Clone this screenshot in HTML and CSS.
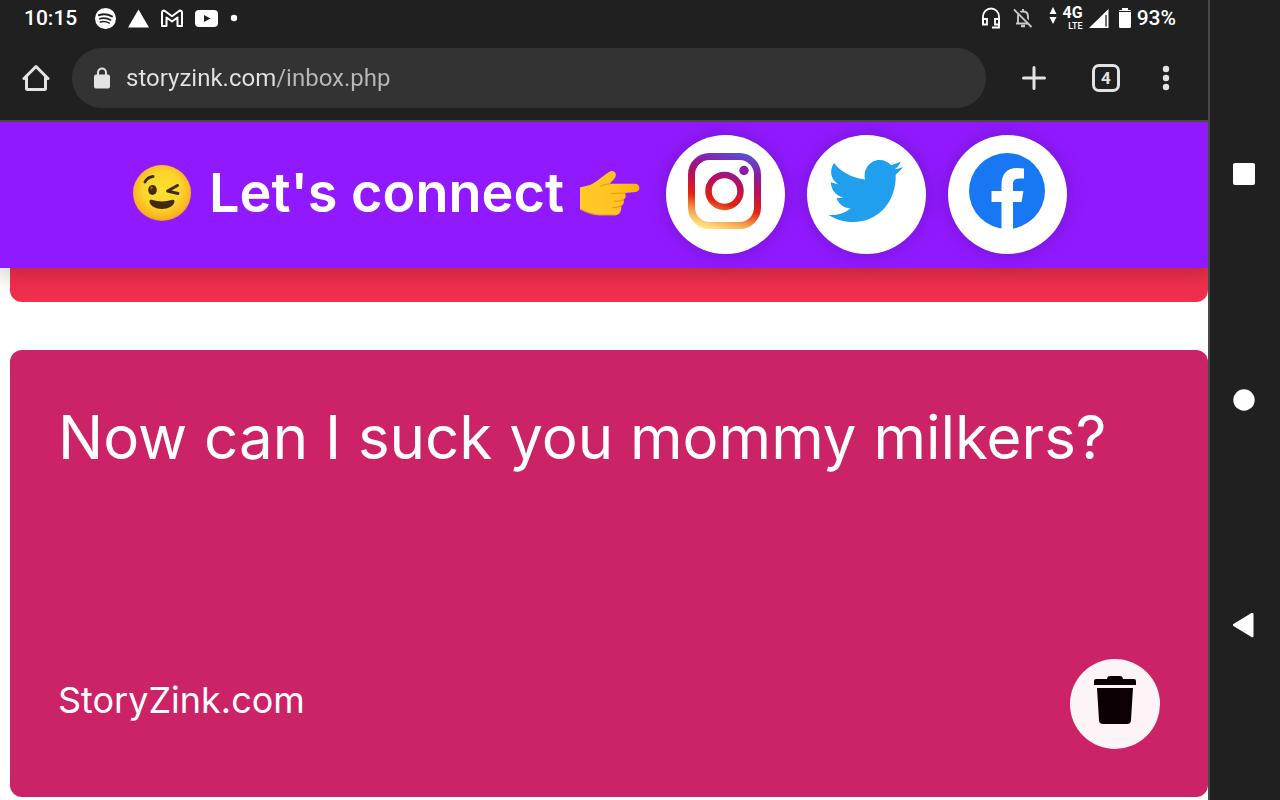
FILE: index.html
```
<!DOCTYPE html>
<html lang="en">
<head>
    <meta charset="UTF-8">
    <meta name="viewport" content="width=device-width, initial-scale=1.0">
    <title>StoryZink Inbox</title>
    <link rel="stylesheet" href="styles.css">
</head>
<body>
    <div class="screen">
        <div class="status-bar">
            <span class="clock">10:15</span>
            <div class="notifications">
                <svg width="21" height="21" viewBox="0 0 21 21" fill="none" stroke="#202020" stroke-linecap="round">
                    <circle cx="10.5" cy="10.5" r="10.5" fill="#fff" stroke="none"/>
                    <path d="M4 7.2c4-1.300 9-.9 13 1.200" stroke-width="2"/>
                    <path d="M4.800 10.700c3.500-1 7.500-.6 10.800 1.200" stroke-width="1.700"/>
                    <path d="M5.300 14c3-.8 6.200-.4 9 1.100" stroke-width="1.400"/>
                </svg>
                <svg width="21" height="21" viewBox="0 0 21 21"><path d="M10.500 1.500 21 19.500H0z" fill="#fff"/></svg>
                <svg width="22" height="21" viewBox="0 0 22 21" fill="none" stroke="#fff" stroke-width="2" stroke-linejoin="round">
                    <path d="M1 4.500C1 2.500 3 2.200 4.300 3.200L11 8.200l6.700-5C19 2.200 21 2.500 21 4.500V18h-4.500V9.500L11 13.500 5.500 9.500V18H1z"/>
                </svg>
                <svg width="23" height="21" viewBox="0 0 23 21"><rect x="0" y="2" width="23" height="17" rx="4" fill="#fff"/><path d="M9 7v7l6.500-3.500z" fill="#202020"/></svg>
                <svg width="8" height="8" viewBox="0 0 8 8"><circle cx="4" cy="4" r="3.200" fill="#fff"/></svg>
            </div>
            <div class="system-icons">
                <svg class="headset" width="20" height="22" viewBox="0 0 20 22" fill="none" stroke="#fff" stroke-width="1.800">
                    <path d="M2 17V9.500a8 8 0 0 1 16 0V20.500h-7"/>
                    <path d="M2 12h4v5.500H2zM14 12h4v5.500h-4z"/>
                </svg>
                <svg class="bell" width="20" height="22" viewBox="0 0 20 22" fill="none" stroke="#c8c8c8" stroke-width="1.900">
                    <path d="M3 16.500h14M5 16.500V9.500C5 6.500 7 4.500 10 4.500s5 2 5 5v7M10 4.500V2"/>
                    <path d="M8 19h4" stroke-width="2.500"/>
                    <path d="M2.500 1.500 19.500 18.500" stroke="#202020" stroke-width="2"/>
                    <path d="M1 2.500 18.500 20"/>
                </svg>
                <svg class="data" width="8" height="24" viewBox="0 0 8 24" fill="#fff"><path d="M4 1 7.500 8h-7zM4 18 .5 11h7z"/></svg>
                <div class="network"><b>4G</b><small>LTE</small></div>
                <svg width="20" height="21" viewBox="0 0 20 21"><path d="M19.500 1v19H0z" fill="#fff"/><path d="M17 7v11.500" stroke="#202020" stroke-width="1.300"/></svg>
                <svg class="battery" width="12" height="21" viewBox="0 0 12 21" fill="#fff"><path d="M3 0h6v2h2.500l.5 1H0l.5-1H3z"/><path d="M0 4h12v14.500a1.500 1.500 0 0 1-1.500 1.500h-9A1.500 1.500 0 0 1 0 18.500z"/></svg>
                <span>93%</span>
            </div>
        </div>

        <div class="toolbar">
            <button class="home" aria-label="Home">
                <svg width="28" height="28" viewBox="0 0 28 28" fill="none" stroke="#e3e3e3" stroke-width="3" stroke-linejoin="round" stroke-linecap="round"><path d="M2 14.500 14 2.500l12 12M4.500 12.500v12a1 1 0 0 0 1 1h17a1 1 0 0 0 1-1v-12"/></svg>
            </button>
            <div class="address">
                <svg width="16" height="22" viewBox="0 0 16 22"><path d="M4 8V5.500a4 4 0 0 1 8 0V8" fill="none" stroke="#e3e3e3" stroke-width="2"/><rect y="7.500" width="16" height="14" rx="2" fill="#e3e3e3"/></svg>
                <input type="text" aria-label="Address" value="storyzink.com/inbox.php">
            </div>
            <button class="new-tab" aria-label="New tab">
                <svg width="26" height="26" viewBox="0 0 26 26" stroke="#e3e3e3" stroke-width="3" stroke-linecap="round"><path d="M13 2.500v21M2.500 13h21"/></svg>
            </button>
            <button class="tabs" aria-label="Open tabs"><span>4</span></button>
            <button class="menu" aria-label="Menu">
                <svg width="8" height="26" viewBox="0 0 8 26" fill="#e3e3e3"><circle cx="4" cy="4" r="3.200"/><circle cx="4" cy="13" r="3.200"/><circle cx="4" cy="22" r="3.200"/></svg>
            </button>
        </div>

        <header class="connect">
            <div class="greeting">
                <svg width="60" height="58" viewBox="0 0 60 58" role="img" aria-label="Winking face">
                    <defs>
                        <radialGradient id="face" cx="50%" cy="45%" r="55%">
                            <stop offset="0" stop-color="#fde030"/>
                            <stop offset=".6" stop-color="#fbd52b"/>
                            <stop offset=".92" stop-color="#f8b222"/>
                            <stop offset="1" stop-color="#ef9220"/>
                        </radialGradient>
                    </defs>
                    <ellipse cx="29" cy="29" rx="29" ry="28" fill="url(#face)"/>
                    <ellipse cx="19.500" cy="26" rx="4.300" ry="5" fill="#422b0d"/>
                    <ellipse cx="18.500" cy="23.800" rx="1.300" ry="1.600" fill="#896024"/>
                    <path d="M12 18c1.500-3.300 4-5 8-5.500M44.500 21.500 34.500 27 45 29.500" fill="none" stroke="#422b0d" stroke-width="2.900" stroke-linecap="round" stroke-linejoin="round"/>
                    <path d="M16.500 38c-.4-2.300 1.500-2.600 3-1.900 6 1.900 13 1.900 19 0 1.800-.7 3.300-.2 3 1.900-1 4-6 7-12.500 7s-11.500-3-12.500-7z" fill="#422b0d"/>
                </svg>
                <h1>Let's connect</h1>
                <svg width="60" height="48" viewBox="0 0 60 48" role="img" aria-label="Pointing right">
                    <defs>
                        <linearGradient id="skin"><stop offset="0" stop-color="#ffca28"/><stop offset=".6" stop-color="#ffc322"/><stop offset="1" stop-color="#ffb300"/></linearGradient>
                    </defs>
                    <path d="M0 18.500 10 16C17 13 22 7.500 29 3c3-2 5.500-1 6.500 1.200 1 2.600-.5 5-2.500 7l-3.500 3.600H55c5.500 0 6 8 .5 8.200L45 24c1.500 3 .5 5.500-1.500 6.700 1 3-.2 5.300-2.400 6.300.8 5-1.600 9-5.600 9H19C12 45.500 5 42.500 0 40z" fill="url(#skin)"/>
                    <path d="M29 14.800c-3 .3-6 1-8 2.500M31 24.500l14-.5M34 32c4 .5 7 0 9.500-1.300M33 38.500c3 .2 5.800-.3 8-1.500M0 40c5 2.500 12 5.500 19 6h16.500" fill="none" stroke="#eb9a10" stroke-width="1.200" stroke-linecap="round"/>
                </svg>
            </div>
            <nav class="social">
                <a href="#instagram" aria-label="Instagram">
                    <svg width="76" height="76" viewBox="0 0 76 76" fill="none">
                        <defs>
                            <linearGradient id="insta" gradientUnits="userSpaceOnUse" x1="28" y1="76" x2="50" y2="0">
                                <stop offset="0" stop-color="#ffe07a"/>
                                <stop offset=".15" stop-color="#f9a04c"/>
                                <stop offset=".35" stop-color="#e3220f"/>
                                <stop offset=".6" stop-color="#b5105c"/>
                                <stop offset=".8" stop-color="#8d1aa5"/>
                                <stop offset="1" stop-color="#594fd0"/>
                            </linearGradient>
                        </defs>
                        <rect x="4.500" y="3.500" width="66" height="69" rx="18" stroke="url(#insta)" stroke-width="7"/>
                        <circle cx="37.500" cy="38" r="16" stroke="url(#insta)" stroke-width="6.500"/>
                        <circle cx="57" cy="17.500" r="4.700" fill="#8b1ca8"/>
                    </svg>
                </a>
                <a href="#twitter" aria-label="Twitter">
                    <svg width="76" height="76" viewBox="0 0 76 76"><path d="M6 10C13 19 24 25 37 26.500 35 16 42 7 51.500 7c5 0 8.500 2 11.500 5 3.500-.7 6.700-1.800 9.700-3.500-1 3.500-3.300 5.800-6 7.800 3-.3 5.600-1 8.300-2.200-2 3-4.300 5.300-7.300 7.400C68.500 48 51 69 25 69 16 69 8 66.500.5 62 9 62.500 16 60.500 22.500 55.500 15.500 55 10.500 51 8.500 44.800c2.300.4 4.300.3 6.500-.3C7.500 42.500 3 36.500 2.800 29c2.200 1.200 4.300 1.800 6.800 1.800C3 26 .8 18 6 10z" fill="#1f9fee"/></svg>
                </a>
                <a href="#facebook" aria-label="Facebook">
                    <svg width="76" height="76" viewBox="0 0 76 76"><circle cx="38" cy="38" r="38" fill="#1877f2"/><path d="M32.500 77V49H22.500V38h10v-6C32.500 20.500 38.500 15 48 15c2.500 0 5 .2 7 .5V25.500h-4.500c-5 0-6.500 2.500-6.500 6V38h10.500L52.500 49H44V77z" fill="#fff"/></svg>
                </a>
            </nav>
        </header>

        <main class="inbox">
            <article class="card card-scrolled"></article>
            <article class="card card-message">
                <p class="message">Now can I suck you mommy milkers?</p>
                <div class="card-footer">
                    <span class="brand">StoryZink.com</span>
                    <button class="delete" aria-label="Delete message">
                        <svg width="42" height="48" viewBox="0 0 42 48" fill="#0d0004"><path d="M2 3h11c.3-2 1.300-3 3-3h10c1.700 0 2.700 1 3 3h11a2 2 0 0 1 2 2v4H0V5a2 2 0 0 1 2-2zM3 12h36l-2 32a4 4 0 0 1-4 4H9a4 4 0 0 1-4-4z"/></svg>
                    </button>
                </div>
            </article>
        </main>
    </div>

    <nav class="system-nav">
        <button aria-label="Recent apps"><svg width="24" height="24" viewBox="0 0 24 24"><rect x="0" y="1" width="22" height="22" rx="2" fill="#fff"/></svg></button>
        <button aria-label="Home screen"><svg width="24" height="24" viewBox="0 0 24 24"><circle cx="11" cy="12" r="10.700" fill="#fff"/></svg></button>
        <button aria-label="Back"><svg width="24" height="26" viewBox="0 0 24 26"><path d="M0 11.200 18.500 0c1-.6 2-.2 2 1v22c0 1.200-1 1.600-2 1L0 12.800z" fill="#fff"/></svg></button>
    </nav>
</body>
</html>
```

FILE: styles.css
```
* {
    box-sizing: border-box;
}
body {
    margin: 0;
    display: flex;
    min-height: 100vh;
    background-color: #202020;
    color: white;
    font-family: Roboto, sans-serif;
}
svg {
    display: block;
    flex-shrink: 0;
}
button {
    display: flex;
    align-items: center;
    justify-content: center;
    padding: 0;
    border: none;
    background: none;
    color: #e3e3e3;
    font-family: inherit;
    cursor: pointer;
}
.screen {
    flex: 1;
    min-width: 0;
    display: flex;
    flex-direction: column;
    border-right: 2px solid #484848;
}

/* status bar */
.status-bar {
    display: flex;
    align-items: center;
    height: 36px;
    padding: 0 32px 0 24px;
    font-size: 21px;
    font-weight: 500;
}
.notifications {
    display: flex;
    align-items: center;
    gap: 12px;
    margin-left: 18px;
}
.system-icons {
    display: flex;
    align-items: center;
    gap: 6px;
    margin-left: auto;
}
.headset {
    margin-right: 6px;
}
.bell {
    margin-right: 10px;
}
.battery {
    margin-left: 4px;
}
.network {
    display: flex;
    flex-direction: column;
    align-items: flex-end;
}
.network b {
    font-size: 16px;
    line-height: 16px;
}
.network small {
    font-size: 9px;
    line-height: 10px;
}

/* browser toolbar */
.toolbar {
    display: flex;
    align-items: center;
    padding: 12px 6px 12px 0;
    border-bottom: 2px solid #484848;
}
.toolbar button {
    height: 48px;
}
.home,
.toolbar .menu {
    width: 72px;
}
.new-tab {
    width: 96px;
}
.tabs {
    width: 48px;
}
.tabs span {
    width: 28px;
    height: 28px;
    border: 3px solid #e3e3e3;
    border-radius: 7px;
    font-size: 17px;
    font-weight: 700;
    line-height: 22px;
}
.address {
    flex: 1;
    min-width: 0;
    display: flex;
    align-items: center;
    gap: 16px;
    height: 60px;
    padding: 0 22px;
    border-radius: 30px;
    background-color: #333;
}
.address input {
    flex: 1;
    min-width: 0;
    padding: 0;
    border: none;
    outline: none;
    font-family: inherit;
    font-size: 24px;
    line-height: 32px;
    /* host is brighter than the path */
    background: linear-gradient(to right, #e3e3e3 150px, #b8b8b8 150px);
    -webkit-background-clip: text;
    background-clip: text;
    color: transparent;
}

/* purple banner */
.connect {
    position: relative;
    z-index: 1;
    display: flex;
    align-items: center;
    justify-content: center;
    padding: 13px 8px 14px 0;
    background-color: #9119ff;
    box-shadow: 0 0 24px 4px rgba(0,0,0,0.25);
    clip-path: inset(0 0 -40px 0);
    font-family: Inter, sans-serif;
}
.greeting {
    display: flex;
    align-items: center;
    padding-bottom: 4px;
}
.greeting h1 {
    margin: 0 16px;
    font-size: 54px;
    line-height: 64px;
    font-weight: 600;
    white-space: nowrap;
}
.social {
    display: flex;
    gap: 22px;
    margin-left: 26px;
}
.social a {
    display: flex;
    justify-content: center;
    width: 119px;
    height: 119px;
    padding-top: 18px;
    border-radius: 50%;
    background-color: white;
    box-shadow: 0 0 20px rgba(0,0,0,0.2);
}

/* messages */
.inbox {
    flex: 1;
    display: flex;
    flex-direction: column;
    gap: 48px;
    padding: 0 0 3px 10px;
    background-color: white;
    font-family: Inter, sans-serif;
}
.card {
    border-radius: 12px;
}
.card-scrolled {
    height: 34px;
    border-radius: 0 0 12px 12px;
    background-color: #f22f4d;
}
.card-message {
    flex: 1;
    display: flex;
    flex-direction: column;
    justify-content: space-between;
    padding: 48px;
    background-color: #cc2366;
}
.message {
    margin: 0;
    font-size: 60px;
    line-height: 78px;
}
.card-footer {
    display: flex;
    align-items: center;
    justify-content: space-between;
}
.brand {
    padding-bottom: 8px;
    font-size: 36px;
    line-height: 48px;
}
.delete {
    align-items: flex-start;
    width: 90px;
    height: 90px;
    padding-top: 17px;
    border-radius: 50%;
    background-color: #fdf4f7;
}

/* android navigation rail */
.system-nav {
    display: flex;
    flex-direction: column;
    justify-content: space-evenly;
    width: 70px;
}
.system-nav button {
    height: 104px;
}
```
